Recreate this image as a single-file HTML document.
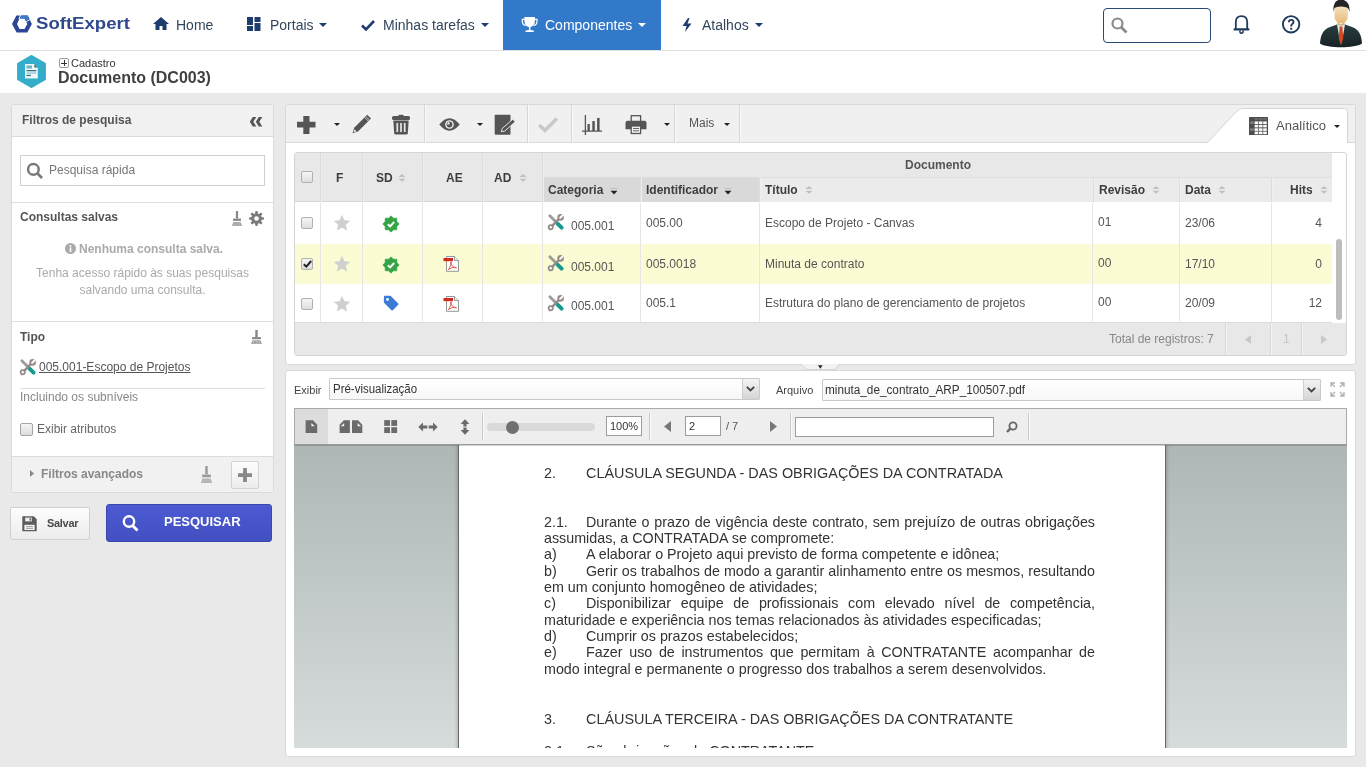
<!DOCTYPE html>
<html><head><meta charset="utf-8">
<style>
*{box-sizing:border-box;margin:0;padding:0}
html,body{width:1366px;height:768px;overflow:hidden}
body{position:relative;will-change:transform;background:#e9e9e9;font-family:"Liberation Sans",sans-serif;color:#333}
.a{position:absolute;white-space:nowrap}
svg{position:absolute;overflow:visible}
/* header */
#hdr{position:absolute;left:0;top:0;width:1366px;height:51px;background:#fff;border-bottom:1px solid #dedede}
.nav{font-size:14px;color:#33465c;top:17px}
#comp{position:absolute;left:503px;top:0;width:158px;height:50px;background:#3279c9}
#ttl{position:absolute;left:0;top:51px;width:1366px;height:42px;background:#fff}
/* left panel */
#lp{position:absolute;left:11px;top:104px;width:263px;height:389px;background:#fff;border:1px solid #d9d9d9;border-radius:2px}
</style></head><body>
<div id="hdr"></div>
<div id="comp"></div>
<!-- logo -->
<svg style="left:8px;top:10px" width="30" height="28" viewBox="0 0 30 28">
<path fill-rule="evenodd" d="M4 14L8.4 5.5H19.7L23.9 14L19.3 22.6H8.6Z M9 14L11.5 8.6H16.5L19.3 14L16.5 19H11.5Z" fill="#2d4797"/>
<path d="M12.7 5L10.9 9M21.9 9.6L18.3 11.6" stroke="#fff" stroke-width="1"/>
<path d="M13.5 5.5H19.7L21.5 9.1L18.1 11L16.5 8.6H11.9Z" fill="#3a78cf"/>
</svg>
<div class="a" id="logo" style="left:36px;top:14px;font-size:16.5px;font-weight:bold;color:#2f4a8c;transform-origin:0 0;transform:scaleX(1.125)">SoftExpert</div>
<!-- Home -->
<svg style="left:153px;top:17px" width="16" height="13" viewBox="0 0 16 13"><path d="M8 0L16 7H13.5V13H9.5V9H6.5V13H2.5V7H0Z" fill="#1e3c6d"/></svg>
<div class="a nav" style="left:176px">Home</div>
<svg style="left:247px;top:17px" width="14" height="14" viewBox="0 0 14 14"><rect x="0" y="0" width="6" height="8" fill="#1e3c6d"/><rect x="0" y="9" width="6" height="5" fill="#1e3c6d"/><rect x="7.5" y="0" width="6" height="5" fill="#1e3c6d"/><rect x="7.5" y="6" width="6" height="8" fill="#1e3c6d"/></svg>
<div class="a nav" style="left:270px">Portais</div>
<svg style="left:319px;top:23px" width="8" height="4" viewBox="0 0 8 4"><path d="M0 0H8L4 4Z" fill="#1e3c6d"/></svg>
<svg style="left:361px;top:20px" width="14" height="11" viewBox="0 0 14 11"><path d="M1 5.5L5 9.5L13 1" stroke="#1e3c6d" stroke-width="2.6" fill="none"/></svg>
<div class="a nav" style="left:383px">Minhas tarefas</div>
<svg style="left:481px;top:23px" width="8" height="4" viewBox="0 0 8 4"><path d="M0 0H8L4 4Z" fill="#1e3c6d"/></svg>
<svg style="left:521px;top:16px" width="17" height="17" viewBox="0 0 17 17"><path d="M3.4 1H13.9V5Q13.9 10.5 8.65 11.3Q3.4 10.5 3.4 5Z" fill="#fff"/><path d="M3.6 3.4H1.3V5.2Q1.3 8.6 4.6 9.6M13.7 3.4H16V5.2Q16 8.6 12.7 9.6" stroke="#fff" stroke-width="1.2" fill="none"/><rect x="7.9" y="10.8" width="1.5" height="3.6" fill="#fff"/><path d="M4.5 16V14.6Q8.65 13.4 12.8 14.6V16Z" fill="#fff"/></svg>
<div class="a nav" style="left:545px;color:#fff">Componentes</div>
<svg style="left:638px;top:23px" width="8" height="4" viewBox="0 0 8 4"><path d="M0 0H8L4 4Z" fill="#fff"/></svg>
<svg style="left:682px;top:18px" width="10" height="14" viewBox="0 0 10 14"><path d="M6 0L0.5 8H4.5L3 14L9.5 5.5H5.5L7.5 0Z" fill="#1e3c6d"/></svg>
<div class="a nav" style="left:702px">Atalhos</div>
<svg style="left:755px;top:23px" width="8" height="4" viewBox="0 0 8 4"><path d="M0 0H8L4 4Z" fill="#1e3c6d"/></svg>
<!-- search -->
<div class="a" style="left:1103px;top:8px;width:108px;height:35px;border:1.5px solid #284a75;border-radius:4px;background:#fff"></div>
<svg style="left:1111px;top:17px" width="18" height="16" viewBox="0 0 18 16"><circle cx="6.5" cy="6.5" r="5" stroke="#8a8a8a" stroke-width="2.2" fill="none"/><path d="M10 10L15.5 15.5" stroke="#8a8a8a" stroke-width="2.8"/></svg>
<!-- bell -->
<svg style="left:1233px;top:15px" width="17" height="19" viewBox="0 0 17 19"><path d="M2.8 14V7.2Q2.8 1.1 8.5 1.1Q14.2 1.1 14.2 7.2V14" stroke="#1e3a5f" stroke-width="1.8" fill="none"/><rect x="0.5" y="13.3" width="16" height="2.2" rx="1" fill="#1e3a5f"/><path d="M6.8 15.5Q6.8 18.3 8.5 18.3Q10.2 18.3 10.2 15.5" stroke="#1e3a5f" stroke-width="1.5" fill="none"/></svg>
<!-- help -->
<svg style="left:1282px;top:15px" width="19" height="19" viewBox="0 0 19 19"><circle cx="9.1" cy="9.3" r="8.2" stroke="#1e3a5f" stroke-width="1.9" fill="none"/><path d="M6.9 7.3Q6.9 4.9 9.2 4.9Q11.5 4.9 11.5 7Q11.5 8.3 10.2 9Q9.2 9.6 9.2 11V11.5" stroke="#1e3a5f" stroke-width="1.9" fill="none"/><rect x="8.2" y="12.8" width="2" height="1.9" fill="#1e3a5f"/></svg>
<!-- avatar -->
<svg style="left:1319px;top:0px" width="44" height="48" viewBox="0 0 44 48">
<defs><linearGradient id="face" x1="0" y1="0" x2="0" y2="1"><stop offset="0" stop-color="#f7e6c6"/><stop offset="1" stop-color="#e8b97a"/></linearGradient>
<linearGradient id="suit" x1="0" y1="0" x2="0" y2="1"><stop offset="0" stop-color="#2a3d40"/><stop offset="1" stop-color="#162326"/></linearGradient></defs>
<path d="M1 43.5C1.5 35 4 29.5 11 27L18 24.5H26L33 27C40 29.5 42.5 35 43 43.5C36 48.5 8 48.5 1 43.5Z" fill="url(#suit)"/>
<path d="M18 24.5H26L24 36L22 44L20 36Z" fill="#e4e6ef"/>
<path d="M20.7 26.5H23.3L24.3 38L22 45.5L19.7 38Z" fill="#d04a1e"/>
<path d="M18.5 20L22 26.5L25.5 20V24L22 27L18.5 24Z" fill="#d9a86a"/>
<path d="M15.5 9.5Q15.5 4 22 4Q28.8 4 28.8 9.5V16Q28.8 23 22 23.5Q15.5 23 15.5 16Z" fill="url(#face)"/>
<path d="M14.3 12Q13.5 0 22 -0.5Q31 0 30.6 12Q29.5 7.5 27 7.2Q22 6 17 7.2Q15 7.5 14.3 12Z" fill="#252525"/>
</svg>
<!-- title -->
<div id="ttl"></div>
<svg style="left:17px;top:55px" width="29" height="33" viewBox="0 0 29 33"><path d="M14.5 0.6L28.3 8.5V24.5L14.5 32.4L0.7 24.5V8.5Z" fill="#33adc9" stroke="#33adc9" stroke-width="1.2" stroke-linejoin="round"/><path d="M8 9H17.3L20.8 12.5V23.6H8Z" fill="#eef8fb"/><path d="M17.3 9V12.5H20.8Z" fill="#3b6e80"/><rect x="9.5" y="10.5" width="5.5" height="3" fill="#6fb3c6"/><rect x="9.5" y="15" width="9.8" height="1.3" fill="#3b6e80"/><rect x="9.5" y="17.3" width="9.8" height="1.5" fill="#9cc9d6"/><rect x="9.5" y="19.8" width="4.2" height="1.3" fill="#3b6e80"/></svg>
<div class="a" style="left:59px;top:58px;width:10px;height:10px;border:1px solid #9a9a9a;border-radius:2px"></div>
<div class="a" style="left:61px;top:62.5px;width:6px;height:1px;background:#333"></div>
<div class="a" style="left:63.5px;top:60px;width:1px;height:6px;background:#333"></div>
<div class="a" style="left:71px;top:57px;font-size:11px;color:#333">Cadastro</div>
<div class="a" style="left:58px;top:69px;font-size:16px;font-weight:bold;color:#404040">Documento (DC003)</div>
<!-- left panel -->
<div class="a" style="left:11px;top:104px;width:263px;height:389px;background:#fff;border:1px solid #dadada;border-radius:3px"></div>
<div class="a" style="left:12px;top:105px;width:261px;height:32px;background:#f1f1f1;border-bottom:1px solid #dcdcdc;border-radius:2px 2px 0 0"></div>
<div class="a" style="left:22px;top:113px;font-size:12px;font-weight:bold;color:#555">Filtros de pesquisa</div>
<svg style="left:249px;top:116px" width="14" height="12" viewBox="0 0 14 12"><path d="M3.8 1H7.3L4.3 5.8L7.3 10.6H3.8L0.8 5.8Z M9.8 1H13.3L10.3 5.8L13.3 10.6H9.8L6.8 5.8Z" fill="#555"/></svg>
<div class="a" style="left:20px;top:155px;width:245px;height:31px;border:1px solid #cfcfcf;background:#fff"></div>
<svg style="left:27px;top:163px" width="17" height="17" viewBox="0 0 17 17"><circle cx="6.4" cy="6.4" r="5.3" stroke="#7a7a7a" stroke-width="2.5" fill="none"/><path d="M10.3 10.3L15 15" stroke="#7a7a7a" stroke-width="2.7"/></svg>
<div class="a" style="left:49px;top:163px;font-size:12px;color:#777">Pesquisa rápida</div>
<div class="a" style="left:12px;top:202px;width:261px;height:1px;background:#dedede"></div>
<div class="a" style="left:20px;top:210px;font-size:12px;font-weight:bold;color:#555">Consultas salvas</div>
<svg style="left:232px;top:211px" width="10" height="15" viewBox="0 0 10 15" preserveAspectRatio="none"><rect x="3.9" y="0" width="2.2" height="7.5" fill="#888"/><rect x="1" y="7.6" width="8" height="2.3" fill="#888"/><path d="M1.3 11H8.7L10 15H0Z" fill="#888" opacity="0.75"/><path d="M2.5 11.5V14.8M5 11.5V14.8M7.5 11.5V14.8" stroke="#fff" stroke-width="0.35" opacity="0.6"/></svg>
<svg style="left:249px;top:211px" width="15" height="15" viewBox="0 0 15 15"><g fill="#7a7a7a"><circle cx="7.5" cy="7.5" r="5.3"/><rect x="6.2" y="0" width="2.6" height="15" rx="1" transform="rotate(0 7.5 7.5)"/><rect x="6.2" y="0" width="2.6" height="15" rx="1" transform="rotate(45 7.5 7.5)"/><rect x="6.2" y="0" width="2.6" height="15" rx="1" transform="rotate(90 7.5 7.5)"/><rect x="6.2" y="0" width="2.6" height="15" rx="1" transform="rotate(135 7.5 7.5)"/></g><circle cx="7.5" cy="7.5" r="2.3" fill="#fff"/></svg>
<svg style="left:65px;top:243px" width="11" height="11" viewBox="0 0 11 11"><circle cx="5.5" cy="5.5" r="5.5" fill="#aaa"/><rect x="4.7" y="4.5" width="1.6" height="4.5" fill="#fff"/><circle cx="5.5" cy="2.9" r="0.95" fill="#fff"/></svg>
<div class="a" style="left:79px;top:242px;font-size:12px;font-weight:bold;color:#aaa">Nenhuma consulta salva.</div>
<div class="a" style="left:12px;top:265px;width:261px;text-align:center;font-size:12px;color:#aaa;line-height:17px;white-space:normal">Tenha acesso rápido às suas pesquisas<br>salvando uma consulta.</div>
<div class="a" style="left:12px;top:321px;width:261px;height:1px;background:#dedede"></div>
<div class="a" style="left:20px;top:330px;font-size:12px;font-weight:bold;color:#555">Tipo</div>
<svg style="left:251px;top:330px" width="11" height="14" viewBox="0 0 10 15" preserveAspectRatio="none"><rect x="3.9" y="0" width="2.2" height="7.5" fill="#888"/><rect x="1" y="7.6" width="8" height="2.3" fill="#888"/><path d="M1.3 11H8.7L10 15H0Z" fill="#888" opacity="0.75"/><path d="M2.5 11.5V14.8M5 11.5V14.8M7.5 11.5V14.8" stroke="#fff" stroke-width="0.35" opacity="0.6"/></svg>
<svg style="left:20px;top:359px" width="16" height="16" viewBox="0 0 16 16"><path d="M1.8 1.8L8.8 8.8" stroke="#9c9c9c" stroke-width="2.8" stroke-linecap="round"/><path d="M9.8 9.8L13.6 13.6" stroke="#179a8c" stroke-width="4" stroke-linecap="round"/><path d="M11.8 4.2L3.2 12.8" stroke="#8f8a88" stroke-width="2.4"/><circle cx="12.6" cy="3.4" r="3.3" fill="#9a8c84"/><path d="M12.2 3.8L14.6 1.4" stroke="#fff" stroke-width="2" stroke-linecap="round"/><circle cx="2.7" cy="13.3" r="2.1" fill="#fff" stroke="#8f8a88" stroke-width="1.7"/></svg>
<div class="a" style="left:39px;top:360px;font-size:12px;color:#555;text-decoration:underline">005.001-Escopo de Projetos</div>
<div class="a" style="left:20px;top:388px;width:245px;height:1px;background:#dedede"></div>
<div class="a" style="left:20px;top:390px;font-size:12px;color:#888">Incluindo os subníveis</div>
<div class="a" style="left:20px;top:423px;width:13px;height:13px;border:1px solid #a5a5a5;background:linear-gradient(#f4f4f4,#dcdcdc);border-radius:2px"></div>
<div class="a" style="left:37px;top:422px;font-size:12px;color:#666">Exibir atributos</div>
<div class="a" style="left:12px;top:456px;width:261px;height:36px;background:#f1f1f1;border-top:1px solid #dcdcdc;border-radius:0 0 2px 2px"></div>
<svg style="left:30px;top:470px" width="4" height="7" viewBox="0 0 4 7"><path d="M0 0L4 3.5L0 7Z" fill="#888"/></svg>
<div class="a" style="left:41px;top:467px;font-size:12px;font-weight:bold;color:#888">Filtros avançados</div>
<svg style="left:201px;top:466px" width="11" height="17" viewBox="0 0 10 15" preserveAspectRatio="none"><rect x="3.9" y="0" width="2.2" height="7.5" fill="#999"/><rect x="1" y="7.6" width="8" height="2.3" fill="#999"/><path d="M1.3 11H8.7L10 15H0Z" fill="#999" opacity="0.75"/><path d="M2.5 11.5V14.8M5 11.5V14.8M7.5 11.5V14.8" stroke="#fff" stroke-width="0.35" opacity="0.6"/></svg>
<div class="a" style="left:231px;top:461px;width:28px;height:28px;border:1px solid #d3d3d3;background:linear-gradient(#fdfdfd,#ececec);border-radius:2px"></div>
<svg style="left:238px;top:468px" width="14" height="14" viewBox="0 0 14 14"><path d="M5.1 0H8.9V5.2H14V8.9H8.9V14H5.1V8.9H0V5.2H5.1Z" fill="#888"/></svg>
<!-- buttons -->
<div class="a" style="left:10px;top:507px;width:80px;height:33px;border:1px solid #cfcfcf;background:linear-gradient(#fdfdfd,#ececec);border-radius:2px"></div>
<svg style="left:22px;top:516px" width="15" height="16" viewBox="0 0 15 16"><path d="M0.3 0.3H11.8L14.7 3.2V15.3H0.3Z" fill="#5c5c5c"/><rect x="3.2" y="1.6" width="6.6" height="3.8" fill="#efefef"/><rect x="7.6" y="2.2" width="1.4" height="2.4" fill="#5c5c5c"/><rect x="2.4" y="8.8" width="10.2" height="5.2" fill="#f4f4f4"/><path d="M4 10.6H11M4 12.4H11" stroke="#8a8a8a" stroke-width="0.8"/></svg>
<div class="a" style="left:47px;top:517px;font-size:11px;font-weight:bold;color:#4a4a4a;letter-spacing:-0.3px">Salvar</div>
<div class="a" style="left:106px;top:504px;width:166px;height:38px;background:linear-gradient(#4c5ad2,#4250c2);border:1px solid #3a47ad;border-radius:3px"></div>
<svg style="left:122px;top:514px" width="17" height="18" viewBox="0 0 17 18"><circle cx="7" cy="7.5" r="5.2" stroke="#fff" stroke-width="2.4" fill="none"/><path d="M10.5 11.5L15.5 16.5" stroke="#fff" stroke-width="2.8"/></svg>
<div class="a" style="left:164px;top:514px;font-size:13px;font-weight:bold;color:#fff">PESQUISAR</div>
<!-- main panel -->
<div class="a" style="left:285px;top:104px;width:1071px;height:261px;background:#fff;border:1px solid #d8d8d8;border-radius:3px"></div>
<div class="a" style="left:286px;top:105px;width:1069px;height:38px;background:#f0f0f0;border-bottom:1px solid #d8d8d8;border-radius:2px 2px 0 0"></div>
<svg style="left:297px;top:116px" width="19" height="18" viewBox="0 0 19 18"><path d="M6.3 0H12.5V5.8H18.5V11.6H12.5V18H6.3V11.6H0V5.8H6.3Z" fill="#555"/></svg>
<svg style="left:334px;top:123px" width="6" height="3" viewBox="0 0 6 3"><path d="M0 0H6L3.0 3Z" fill="#222"/></svg>
<svg style="left:352px;top:114px" width="20" height="20" viewBox="0 0 20 20"><path d="M15.2 0.8L19 4.6L6 17.6L0.5 19.3L2.2 13.8Z" fill="#555"/><path d="M12.6 3.4L16.4 7.2M13.7 2.3L17.5 6.1" stroke="#f0f0f0" stroke-width="0.7"/><path d="M2.4 15.2L4.6 17.4L1.6 18.3Z" fill="#f0f0f0"/></svg>
<svg style="left:391px;top:114px" width="20" height="21" viewBox="0 0 20 21"><path d="M7.5 0.8H12.5V2.3H7.5Z" fill="#555"/><rect x="1" y="2" width="18" height="4" rx="1.5" fill="#555"/><path d="M2.3 6.5H17.7L16.8 19.2Q16.6 20.5 15.3 20.5H4.7Q3.4 20.5 3.2 19.2Z" fill="#555"/><path d="M6.3 9V18M10 9V18M13.7 9V18" stroke="#e8e8e8" stroke-width="1.7"/></svg>
<div class="a" style="left:424px;top:105px;width:1px;height:38px;background:#d6d6d6;box-shadow:1px 0 0 #fafafa"></div>
<svg style="left:439px;top:118px" width="21" height="13" viewBox="0 0 21 13"><path d="M0.3 6.5Q10.5 -6 20.7 6.5Q10.5 19 0.3 6.5Z" fill="#555"/><circle cx="10.5" cy="6.5" r="4.3" fill="#f0f0f0"/><circle cx="10.5" cy="6.5" r="2.9" fill="#555"/><path d="M10.5 6.5H8.1A2.4 2.4 0 0 1 10.5 4.1Z" fill="#f0f0f0"/></svg>
<svg style="left:477px;top:123px" width="6" height="3" viewBox="0 0 6 3"><path d="M0 0H6L3.0 3Z" fill="#222"/></svg>
<svg style="left:494px;top:114px" width="22" height="21" viewBox="0 0 22 21"><rect x="0.7" y="0.8" width="15.8" height="20" rx="0.8" fill="#555"/><path d="M7.3 17.7L8.2 14.5L18.8 5.15L21.2 7.85L10.6 17.2Z" fill="#555" stroke="#f0f0f0" stroke-width="0.9" stroke-linejoin="round"/></svg>
<div class="a" style="left:527px;top:105px;width:1px;height:38px;background:#d6d6d6;box-shadow:1px 0 0 #fafafa"></div>
<svg style="left:538px;top:117px" width="20" height="16" viewBox="0 0 20 16"><path d="M1.2 8L7 13.5L18.8 1.5" stroke="#c8c8c8" stroke-width="3.6" fill="none"/></svg>
<div class="a" style="left:571px;top:105px;width:1px;height:38px;background:#d6d6d6;box-shadow:1px 0 0 #fafafa"></div>
<svg style="left:582px;top:115px" width="21" height="20" viewBox="0 0 21 20"><path d="M3.4 0V20M0 16.1H20" stroke="#555" stroke-width="1.3"/><rect x="5.5" y="9" width="2.3" height="7" fill="#555"/><rect x="10.3" y="6.1" width="2.5" height="9.9" fill="#555"/><rect x="15.1" y="2.9" width="2.5" height="13.1" fill="#555"/></svg>
<svg style="left:625px;top:115px" width="22" height="19" viewBox="0 0 22 19"><rect x="6.2" y="0.7" width="9.4" height="6" fill="none" stroke="#555" stroke-width="1.3"/><path d="M2.5 5.8H19.5Q21.5 5.8 21.5 7.8V14.2H0.5V7.8Q0.5 5.8 2.5 5.8Z" fill="#555"/><rect x="6.2" y="11" width="9.4" height="7.5" fill="#f0f0f0" stroke="#555" stroke-width="1.3"/><path d="M8 13.5H14M8 15.8H14" stroke="#555" stroke-width="0.9"/></svg>
<svg style="left:664px;top:123px" width="6" height="3" viewBox="0 0 6 3"><path d="M0 0H6L3.0 3Z" fill="#222"/></svg>
<div class="a" style="left:674px;top:105px;width:1px;height:38px;background:#d6d6d6;box-shadow:1px 0 0 #fafafa"></div>
<div class="a" style="left:689px;top:116px;font-size:12px;color:#555">Mais</div>
<svg style="left:724px;top:123px" width="6" height="3" viewBox="0 0 6 3"><path d="M0 0H6L3.0 3Z" fill="#222"/></svg>
<div class="a" style="left:739px;top:105px;width:1px;height:38px;background:#d6d6d6;box-shadow:1px 0 0 #fafafa"></div>
<!-- analitico tab -->
<svg style="left:1206px;top:108px" width="143" height="36" viewBox="0 0 143 36"><path d="M0.5 35.5L31 3Q33.5 0.5 37 0.5H138.5Q141.5 0.5 141.5 3.5V35.5" fill="#fff" stroke="#d5d5d5" stroke-width="1"/><rect x="0" y="35" width="142" height="2" fill="#fff"/></svg>
<svg style="left:1249px;top:117px" width="19" height="18" viewBox="0 0 19 18"><rect x="0" y="0" width="19" height="18" rx="0.6" fill="#4d4d4d"/><g fill="#fbfbfb"><rect x="5.6" y="4.4" width="3.6" height="2.6"/><rect x="5.6" y="7.8" width="3.6" height="2.6"/><rect x="5.6" y="11.3" width="3.6" height="2.6"/><rect x="5.6" y="14.6" width="3.6" height="2.6"/><rect x="9.9" y="4.4" width="3.6" height="2.6"/><rect x="9.9" y="7.8" width="3.6" height="2.6"/><rect x="9.9" y="11.3" width="3.6" height="2.6"/><rect x="9.9" y="14.6" width="3.6" height="2.6"/><rect x="14.2" y="4.4" width="3.6" height="2.6"/><rect x="14.2" y="7.8" width="3.6" height="2.6"/><rect x="14.2" y="11.3" width="3.6" height="2.6"/><rect x="14.2" y="14.6" width="3.6" height="2.6"/></g><g fill="#7a7a7a"><rect x="1" y="4.4" width="3.8" height="2.6"/><rect x="1" y="11.3" width="3.8" height="2.6"/></g><g fill="#6a6a6a"><rect x="5.6" y="1" width="3.6" height="2.2"/><rect x="9.9" y="1" width="3.6" height="2.2"/><rect x="14.2" y="1" width="3.6" height="2.2"/></g></svg>
<div class="a" style="left:1276px;top:118px;font-size:13px;color:#555">Analítico</div>
<svg style="left:1334px;top:125px" width="6" height="3" viewBox="0 0 6 3"><path d="M0 0H6L3.0 3Z" fill="#222"/></svg>
<!-- table -->
<div class="a" style="left:294px;top:152px;width:1053px;height:204px;border:1px solid #d5d5d5;border-radius:3px;background:#fff"></div>
<div class="a" style="left:295px;top:153px;width:1037px;height:49px;background:#e8e8e8;border-bottom:1px solid #d6d6d6"></div>
<div class="a" style="left:542px;top:177px;width:790px;height:25px;background:#ebebeb;border-top:1px solid #dedede"></div>
<div class="a" style="left:542px;top:178px;width:217px;height:24px;background:#d9d9d9"></div>
<div class="a" style="left:320px;top:153px;width:1px;height:49px;background:#dcdcdc;box-shadow:1px 0 0 #ececec"></div>
<div class="a" style="left:362px;top:153px;width:1px;height:49px;background:#dcdcdc;box-shadow:1px 0 0 #ececec"></div>
<div class="a" style="left:422px;top:153px;width:1px;height:49px;background:#dcdcdc;box-shadow:1px 0 0 #ececec"></div>
<div class="a" style="left:482px;top:153px;width:1px;height:49px;background:#dcdcdc;box-shadow:1px 0 0 #ececec"></div>
<div class="a" style="left:542px;top:153px;width:1px;height:49px;background:#dcdcdc;box-shadow:1px 0 0 #ececec"></div>
<div class="a" style="left:640px;top:178px;width:1px;height:24px;background:#dddddd;box-shadow:1px 0 0 #efefef"></div>
<div class="a" style="left:759px;top:178px;width:1px;height:24px;background:#dddddd;box-shadow:1px 0 0 #efefef"></div>
<div class="a" style="left:1093px;top:178px;width:1px;height:24px;background:#dddddd;box-shadow:1px 0 0 #efefef"></div>
<div class="a" style="left:1179px;top:178px;width:1px;height:24px;background:#dddddd;box-shadow:1px 0 0 #efefef"></div>
<div class="a" style="left:1271px;top:178px;width:1px;height:24px;background:#dddddd;box-shadow:1px 0 0 #efefef"></div>
<div class="a" style="left:301px;top:171px;width:12px;height:12px;border:1px solid #b0b0b0;border-radius:2px;background:linear-gradient(#f6f6f6,#dedede)"></div>
<div class="a" style="left:336px;top:171px;font-size:12px;font-weight:bold;color:#3d3d3d">F</div>
<div class="a" style="left:376px;top:171px;font-size:12px;font-weight:bold;color:#3d3d3d">SD</div>
<svg style="left:398px;top:174px" width="8" height="8" viewBox="0 0 8 8"><path d="M0.5 3L4 0L7.5 3Z M0.5 4.8L4 7.8L7.5 4.8Z" fill="#c0c0c0"/></svg>
<div class="a" style="left:446px;top:171px;font-size:12px;font-weight:bold;color:#3d3d3d">AE</div>
<div class="a" style="left:494px;top:171px;font-size:12px;font-weight:bold;color:#3d3d3d">AD</div>
<svg style="left:519px;top:174px" width="8" height="8" viewBox="0 0 8 8"><path d="M0.5 3L4 0L7.5 3Z M0.5 4.8L4 7.8L7.5 4.8Z" fill="#c0c0c0"/></svg>
<div class="a" style="left:905px;top:158px;font-size:12px;font-weight:bold;color:#555">Documento</div>
<div class="a" style="left:548px;top:183px;font-size:12px;font-weight:bold;color:#3d3d3d">Categoria</div>
<svg style="left:610px;top:187px" width="8" height="8" viewBox="0 0 8 8"><path d="M0.5 1.5H7.5" stroke="#bbb" stroke-width="1"/><path d="M0.5 3.8L4 7.5L7.5 3.8Z" fill="#222"/></svg>
<div class="a" style="left:646px;top:183px;font-size:12px;font-weight:bold;color:#3d3d3d">Identificador</div>
<svg style="left:724px;top:187px" width="8" height="8" viewBox="0 0 8 8"><path d="M0.5 1.5H7.5" stroke="#bbb" stroke-width="1"/><path d="M0.5 3.8L4 7.5L7.5 3.8Z" fill="#222"/></svg>
<div class="a" style="left:765px;top:183px;font-size:12px;font-weight:bold;color:#3d3d3d">Título</div>
<svg style="left:805px;top:186px" width="8" height="8" viewBox="0 0 8 8"><path d="M0.5 3L4 0L7.5 3Z M0.5 4.8L4 7.8L7.5 4.8Z" fill="#c0c0c0"/></svg>
<div class="a" style="left:1099px;top:183px;font-size:12px;font-weight:bold;color:#3d3d3d">Revisão</div>
<svg style="left:1152px;top:186px" width="8" height="8" viewBox="0 0 8 8"><path d="M0.5 3L4 0L7.5 3Z M0.5 4.8L4 7.8L7.5 4.8Z" fill="#c0c0c0"/></svg>
<div class="a" style="left:1185px;top:183px;font-size:12px;font-weight:bold;color:#3d3d3d">Data</div>
<svg style="left:1218px;top:186px" width="8" height="8" viewBox="0 0 8 8"><path d="M0.5 3L4 0L7.5 3Z M0.5 4.8L4 7.8L7.5 4.8Z" fill="#c0c0c0"/></svg>
<div class="a" style="left:1290px;top:183px;font-size:12px;font-weight:bold;color:#3d3d3d">Hits</div>
<svg style="left:1320px;top:186px" width="8" height="8" viewBox="0 0 8 8"><path d="M0.5 3L4 0L7.5 3Z M0.5 4.8L4 7.8L7.5 4.8Z" fill="#c0c0c0"/></svg>
<div class="a" style="left:295px;top:244px;width:1037px;height:40px;background:#fcfcd4"></div>
<div class="a" style="left:320px;top:203px;width:1px;height:120px;background:#e6e6e6"></div>
<div class="a" style="left:362px;top:203px;width:1px;height:120px;background:#e6e6e6"></div>
<div class="a" style="left:422px;top:203px;width:1px;height:120px;background:#e6e6e6"></div>
<div class="a" style="left:482px;top:203px;width:1px;height:120px;background:#e6e6e6"></div>
<div class="a" style="left:542px;top:203px;width:1px;height:120px;background:#e6e6e6"></div>
<div class="a" style="left:640px;top:203px;width:1px;height:120px;background:#e6e6e6"></div>
<div class="a" style="left:759px;top:203px;width:1px;height:120px;background:#e6e6e6"></div>
<div class="a" style="left:1092px;top:203px;width:1px;height:120px;background:#e6e6e6"></div>
<div class="a" style="left:1179px;top:203px;width:1px;height:120px;background:#e6e6e6"></div>
<div class="a" style="left:1271px;top:203px;width:1px;height:120px;background:#e6e6e6"></div>
<div class="a" style="left:295px;top:322px;width:1037px;height:1px;background:#dcdcdc"></div>
<div class="a" style="left:301px;top:217px;width:12px;height:12px;border:1px solid #b0b0b0;border-radius:2px;background:linear-gradient(#f6f6f6,#dedede)"></div>
<svg style="left:334px;top:215px" width="16" height="16" viewBox="0 0 16 16"><path d="M8 0.5L10.2 5.6L15.6 6.1L11.5 9.7L12.7 15.1L8 12.3L3.3 15.1L4.5 9.7L0.4 6.1L5.8 5.6Z" fill="#cfcfcf" stroke="#cfcfcf" stroke-width="0.6" stroke-linejoin="round"/></svg>
<svg style="left:383px;top:216px" width="16" height="16" viewBox="0 0 16 16"><path d="M8.00 -0.10 L10.41 2.18 L13.73 2.27 L13.82 5.59 L16.10 8.00 L13.82 10.41 L13.73 13.73 L10.41 13.82 L8.00 16.10 L5.59 13.82 L2.27 13.73 L2.18 10.41 L-0.10 8.00 L2.18 5.59 L2.27 2.27 L5.59 2.18Z" fill="#34a447" stroke="#34a447" stroke-width="0.8" stroke-linejoin="round"/><path d="M4.8 8.3L7.1 10.4L11.2 6" stroke="#fff" stroke-width="1.9" fill="none"/></svg>
<svg style="left:548px;top:214px" width="16" height="16" viewBox="0 0 16 16"><path d="M1.8 1.8L8.8 8.8" stroke="#9c9c9c" stroke-width="2.8" stroke-linecap="round"/><path d="M9.8 9.8L13.6 13.6" stroke="#179a8c" stroke-width="4" stroke-linecap="round"/><path d="M11.8 4.2L3.2 12.8" stroke="#8f8a88" stroke-width="2.4"/><circle cx="12.6" cy="3.4" r="3.3" fill="#9a8c84"/><path d="M12.2 3.8L14.6 1.4" stroke="#fff" stroke-width="2" stroke-linecap="round"/><circle cx="2.7" cy="13.3" r="2.1" fill="#fff" stroke="#8f8a88" stroke-width="1.7"/></svg>
<div class="a" style="left:571px;top:219px;font-size:12px;color:#555">005.001</div>
<div class="a" style="left:646px;top:216px;font-size:12px;color:#555">005.00</div>
<div class="a" style="left:765px;top:216px;font-size:12px;color:#555">Escopo de Projeto - Canvas</div>
<div class="a" style="left:1098px;top:215px;font-size:12px;color:#555">01</div>
<div class="a" style="left:1185px;top:216px;font-size:12px;color:#555">23/06</div>
<div class="a" style="left:1230px;top:216px;width:92px;text-align:right;font-size:12px;color:#555">4</div>
<div class="a" style="left:301px;top:258px;width:12px;height:12px;border:1px solid #b0b0b0;border-radius:2px;background:linear-gradient(#f6f6f6,#dedede)"></div><svg style="left:303px;top:260px" width="9" height="8" viewBox="0 0 9 8"><path d="M0.8 4.2L3.3 6.6L8.2 1" stroke="#222" stroke-width="2" fill="none"/></svg>
<svg style="left:334px;top:256px" width="16" height="16" viewBox="0 0 16 16"><path d="M8 0.5L10.2 5.6L15.6 6.1L11.5 9.7L12.7 15.1L8 12.3L3.3 15.1L4.5 9.7L0.4 6.1L5.8 5.6Z" fill="#cfcfcf" stroke="#cfcfcf" stroke-width="0.6" stroke-linejoin="round"/></svg>
<svg style="left:383px;top:257px" width="16" height="16" viewBox="0 0 16 16"><path d="M8.00 -0.10 L10.41 2.18 L13.73 2.27 L13.82 5.59 L16.10 8.00 L13.82 10.41 L13.73 13.73 L10.41 13.82 L8.00 16.10 L5.59 13.82 L2.27 13.73 L2.18 10.41 L-0.10 8.00 L2.18 5.59 L2.27 2.27 L5.59 2.18Z" fill="#34a447" stroke="#34a447" stroke-width="0.8" stroke-linejoin="round"/><path d="M4.8 8.3L7.1 10.4L11.2 6" stroke="#fff" stroke-width="1.9" fill="none"/></svg>
<svg style="left:443px;top:254.5px" width="17" height="17" viewBox="0 0 17 17"><path d="M3.5 1.5H11.5L15.5 5.5V16.3H3.5Z" fill="#fff" stroke="#8a8a8a" stroke-width="0.9"/><path d="M11.5 1.5V5.5H15.5" fill="#eee" stroke="#8a8a8a" stroke-width="0.8"/><rect x="0.5" y="3" width="9.5" height="3.2" fill="#d32a1e"/><path d="M5.5 14.5C7 12 8.5 9 8.5 7.5C8.5 6.5 7.5 6.5 7.5 7.5C7.5 9.5 10 12.5 13.5 13C12.5 12 9 12 5.5 14.5Z" fill="none" stroke="#d9443a" stroke-width="0.9"/></svg>
<svg style="left:548px;top:255px" width="16" height="16" viewBox="0 0 16 16"><path d="M1.8 1.8L8.8 8.8" stroke="#9c9c9c" stroke-width="2.8" stroke-linecap="round"/><path d="M9.8 9.8L13.6 13.6" stroke="#179a8c" stroke-width="4" stroke-linecap="round"/><path d="M11.8 4.2L3.2 12.8" stroke="#8f8a88" stroke-width="2.4"/><circle cx="12.6" cy="3.4" r="3.3" fill="#9a8c84"/><path d="M12.2 3.8L14.6 1.4" stroke="#fff" stroke-width="2" stroke-linecap="round"/><circle cx="2.7" cy="13.3" r="2.1" fill="#fff" stroke="#8f8a88" stroke-width="1.7"/></svg>
<div class="a" style="left:571px;top:260px;font-size:12px;color:#555">005.001</div>
<div class="a" style="left:646px;top:257px;font-size:12px;color:#555">005.0018</div>
<div class="a" style="left:765px;top:257px;font-size:12px;color:#555">Minuta de contrato</div>
<div class="a" style="left:1098px;top:256px;font-size:12px;color:#555">00</div>
<div class="a" style="left:1185px;top:257px;font-size:12px;color:#555">17/10</div>
<div class="a" style="left:1230px;top:257px;width:92px;text-align:right;font-size:12px;color:#555">0</div>
<div class="a" style="left:301px;top:298px;width:12px;height:12px;border:1px solid #b0b0b0;border-radius:2px;background:linear-gradient(#f6f6f6,#dedede)"></div>
<svg style="left:334px;top:296px" width="16" height="16" viewBox="0 0 16 16"><path d="M8 0.5L10.2 5.6L15.6 6.1L11.5 9.7L12.7 15.1L8 12.3L3.3 15.1L4.5 9.7L0.4 6.1L5.8 5.6Z" fill="#cfcfcf" stroke="#cfcfcf" stroke-width="0.6" stroke-linejoin="round"/></svg>
<svg style="left:383px;top:295px" width="16" height="16" viewBox="0 0 16 16"><path d="M1 1.5Q1 0.8 1.8 0.8H7.5L15.2 8.5Q15.8 9.2 15.2 9.8L9.8 15.2Q9.2 15.8 8.5 15.2L0.8 7.5Z" fill="#3a7bd5"/><circle cx="4.5" cy="4.5" r="1.4" fill="#fff"/></svg>
<svg style="left:443px;top:294.5px" width="17" height="17" viewBox="0 0 17 17"><path d="M3.5 1.5H11.5L15.5 5.5V16.3H3.5Z" fill="#fff" stroke="#8a8a8a" stroke-width="0.9"/><path d="M11.5 1.5V5.5H15.5" fill="#eee" stroke="#8a8a8a" stroke-width="0.8"/><rect x="0.5" y="3" width="9.5" height="3.2" fill="#d32a1e"/><path d="M5.5 14.5C7 12 8.5 9 8.5 7.5C8.5 6.5 7.5 6.5 7.5 7.5C7.5 9.5 10 12.5 13.5 13C12.5 12 9 12 5.5 14.5Z" fill="none" stroke="#d9443a" stroke-width="0.9"/></svg>
<svg style="left:548px;top:295px" width="16" height="16" viewBox="0 0 16 16"><path d="M1.8 1.8L8.8 8.8" stroke="#9c9c9c" stroke-width="2.8" stroke-linecap="round"/><path d="M9.8 9.8L13.6 13.6" stroke="#179a8c" stroke-width="4" stroke-linecap="round"/><path d="M11.8 4.2L3.2 12.8" stroke="#8f8a88" stroke-width="2.4"/><circle cx="12.6" cy="3.4" r="3.3" fill="#9a8c84"/><path d="M12.2 3.8L14.6 1.4" stroke="#fff" stroke-width="2" stroke-linecap="round"/><circle cx="2.7" cy="13.3" r="2.1" fill="#fff" stroke="#8f8a88" stroke-width="1.7"/></svg>
<div class="a" style="left:571px;top:299px;font-size:12px;color:#555">005.001</div>
<div class="a" style="left:646px;top:296px;font-size:12px;color:#555">005.1</div>
<div class="a" style="left:765px;top:296px;font-size:12px;color:#555">Estrutura do plano de gerenciamento de projetos</div>
<div class="a" style="left:1098px;top:295px;font-size:12px;color:#555">00</div>
<div class="a" style="left:1185px;top:296px;font-size:12px;color:#555">20/09</div>
<div class="a" style="left:1230px;top:296px;width:92px;text-align:right;font-size:12px;color:#555">12</div>
<div class="a" style="left:1336px;top:239px;width:6px;height:81px;background:#bdbdbd;border-radius:3px"></div>
<div class="a" style="left:295px;top:323px;width:1051px;height:32px;background:#e8e8e8;border-radius:0 0 2px 2px"></div>
<div class="a" style="left:1109px;top:332px;font-size:12px;color:#888">Total de registros: 7</div>
<div class="a" style="left:1225px;top:323px;width:1px;height:32px;background:#d8d8d8;box-shadow:1px 0 0 #f4f4f4"></div>
<div class="a" style="left:1270px;top:323px;width:1px;height:32px;background:#d8d8d8;box-shadow:1px 0 0 #f4f4f4"></div>
<div class="a" style="left:1301px;top:323px;width:1px;height:32px;background:#d8d8d8;box-shadow:1px 0 0 #f4f4f4"></div>
<svg style="left:1245px;top:335px" width="6" height="9" viewBox="0 0 6 9"><path d="M6 0V9L0 4.5Z" fill="#c8c8c8"/></svg>
<div class="a" style="left:1283px;top:332px;font-size:12px;color:#c4c4c4">1</div>
<svg style="left:1321px;top:335px" width="6" height="9" viewBox="0 0 6 9"><path d="M0 0V9L6 4.5Z" fill="#c8c8c8"/></svg>
<svg style="left:800px;top:364px" width="40" height="7" viewBox="0 0 40 7"><path d="M1 0L6.5 5.6H35.5L39.5 0" fill="#f2f2f2" stroke="#d2d2d2" stroke-width="1"/><path d="M18 1.3L20.3 4.8L22.6 1.3Z" fill="#222"/></svg>
<!-- preview -->
<div class="a" style="left:285px;top:370px;width:1071px;height:387px;background:#fff;border:1px solid #d8d8d8;border-radius:3px"></div>
<div class="a" style="left:294px;top:384px;font-size:11px;color:#444">Exibir</div>
<div class="a" style="left:329px;top:378px;width:431px;height:22px;border:1px solid #c9c9c9;background:linear-gradient(#fff,#f7f7f7);border-radius:1px"></div><div class="a" style="left:742px;top:379px;width:17px;height:20px;background:linear-gradient(#f4f4f4,#d4d4d4);border-left:1px solid #cfcfcf"></div><svg style="left:746px;top:386px" width="9" height="6" viewBox="0 0 9 6"><path d="M0.8 0.8L4.5 4.5L8.2 0.8" stroke="#444" stroke-width="1.8" fill="none"/></svg><div class="a" style="left:333px;top:382px;font-size:12px;color:#333;transform-origin:0 0;transform:scaleX(0.955)">Pré-visualização</div>
<div class="a" style="left:776px;top:384px;font-size:11px;color:#444">Arquivo</div>
<div class="a" style="left:822px;top:379px;width:499px;height:22px;border:1px solid #c9c9c9;background:linear-gradient(#fff,#f7f7f7);border-radius:1px"></div><div class="a" style="left:1303px;top:380px;width:17px;height:20px;background:linear-gradient(#f4f4f4,#d4d4d4);border-left:1px solid #cfcfcf"></div><svg style="left:1307px;top:387px" width="9" height="6" viewBox="0 0 9 6"><path d="M0.8 0.8L4.5 4.5L8.2 0.8" stroke="#444" stroke-width="1.8" fill="none"/></svg><div class="a" style="left:825px;top:383px;font-size:12px;color:#333;transform-origin:0 0;transform:scaleX(0.98)">minuta_de_contrato_ARP_100507.pdf</div>
<svg style="left:1330px;top:382px" width="15" height="15" viewBox="0 0 15 15"><g stroke="#b0b0b0" stroke-width="1.3" fill="none"><path d="M1 5V1H5M1 1L5 5"/><path d="M14 5V1H10M14 1L10 5"/><path d="M1 10V14H5M1 14L5 10"/><path d="M14 10V14H10M14 14L10 10"/></g></svg>
<div class="a" style="left:294px;top:408px;width:1053px;height:37px;background:#eeeeee;border:1px solid #a9a9a9;border-bottom-color:#9a9a9a"></div>
<div class="a" style="left:295px;top:409px;width:33px;height:35px;background:#dcdcdc"></div>
<svg style="left:305px;top:420px" width="13" height="14" viewBox="0 0 13 14"><path d="M0.6 0.2H8L12.2 4.7V13.1H0.6Z" fill="#6a6a6a"/><path d="M6.4 3.1V6.2H9.9Z" fill="#f0f0f0"/></svg>
<svg style="left:339px;top:420px" width="24" height="14" viewBox="0 0 24 14"><path d="M10.9 0.2H4.8L0.6 4.7V13.1H10.9Z" fill="#6a6a6a"/><path d="M5.2 3.1V6.2H1.7Z" fill="#f0f0f0"/><path d="M13 0.2H19.1L23.3 4.7V13.1H13Z" fill="#6a6a6a"/><path d="M18.6 3.1V6.2H22.1Z" fill="#f0f0f0"/></svg>
<svg style="left:384px;top:420px" width="14" height="14" viewBox="0 0 14 14"><g fill="#6a6a6a"><rect x="0.2" y="0.1" width="5.8" height="5.8"/><rect x="7.3" y="0.1" width="5.8" height="5.8"/><rect x="0.2" y="7.2" width="5.8" height="5.8"/><rect x="7.3" y="7.2" width="5.8" height="5.8"/></g></svg>
<svg style="left:418px;top:422px" width="20" height="10" viewBox="0 0 20 10"><path d="M0.3 5L5 0.6V3.4H9.3V6.6H5V9.4Z M19.7 5L15 0.6V3.4H10.7V6.6H15V9.4Z" fill="#6a6a6a"/></svg>
<svg style="left:460px;top:419px" width="10" height="16" viewBox="0 0 10 16"><path d="M5 0.3L9.4 5H6.6V7.4H3.4V5H0.6Z M5 15.7L9.4 11H6.6V8.6H3.4V11H0.6Z" fill="#6a6a6a"/></svg>
<div class="a" style="left:482px;top:413px;width:1px;height:27px;background:#c8c8c8;box-shadow:1px 0 0 #fafafa"></div>
<div class="a" style="left:487px;top:423px;width:108px;height:8px;background:#dadada;border-radius:4px"></div>
<div class="a" style="left:506px;top:421px;width:13px;height:13px;background:#707070;border-radius:50%"></div>
<div class="a" style="left:606px;top:416px;width:36px;height:20px;border:1px solid #9c9c9c;background:#fff"></div>
<div class="a" style="left:610px;top:420px;font-size:11px;color:#333">100%</div>
<div class="a" style="left:649px;top:413px;width:1px;height:27px;background:#c8c8c8;box-shadow:1px 0 0 #fafafa"></div>
<svg style="left:664px;top:421px" width="7" height="11" viewBox="0 0 7 11"><path d="M7 0V11L0 5.5Z" fill="#777"/></svg>
<div class="a" style="left:685px;top:416px;width:36px;height:20px;border:1px solid #9c9c9c;background:#fff"></div>
<div class="a" style="left:689px;top:420px;font-size:11px;color:#333">2</div>
<div class="a" style="left:726px;top:420px;font-size:11px;color:#555">/ 7</div>
<svg style="left:770px;top:421px" width="7" height="11" viewBox="0 0 7 11"><path d="M0 0V11L7 5.5Z" fill="#777"/></svg>
<div class="a" style="left:790px;top:413px;width:1px;height:27px;background:#c8c8c8;box-shadow:1px 0 0 #fafafa"></div>
<div class="a" style="left:795px;top:417px;width:199px;height:20px;border:1px solid #9c9c9c;background:#fff"></div>
<svg style="left:1006px;top:421px" width="12" height="12" viewBox="0 0 12 12"><circle cx="7" cy="5" r="3.6" stroke="#666" stroke-width="1.8" fill="none"/><path d="M4.3 7.7L1 11" stroke="#666" stroke-width="2.4"/></svg>
<div class="a" style="left:1028px;top:413px;width:1px;height:27px;background:#c8c8c8;box-shadow:1px 0 0 #fafafa"></div>
<div class="a" style="left:294px;top:445px;width:1053px;height:303px;background:linear-gradient(#afb7b6,#d5dcdb);overflow:hidden"><div style="position:absolute;left:164px;top:0;width:708px;height:320px;background:#fff;border-left:1.5px solid #666;border-right:1.5px solid #666;box-shadow:-2px 0 2px rgba(0,0,0,0.12),2px 0 2px rgba(0,0,0,0.12)"></div><div style="position:absolute;left:0;top:0;width:1053px;height:1px;background:rgba(0,0,0,0.18)"></div></div>
<div class="a" id="doc" style="left:544px;top:445px;width:551px;height:303px;overflow:hidden;white-space:normal;font-size:14.3px;color:#333;line-height:16.4px">
<div style="position:absolute;top:20px;left:0;white-space:nowrap">2.</div><div style="position:absolute;top:20px;left:42px;white-space:nowrap;font-size:14.4px">CLÁUSULA SEGUNDA - DAS OBRIGAÇÕES DA CONTRATADA</div>
<div style="position:absolute;top:68.5px;left:0;width:551px;text-align:justify;text-align-last:left;line-height:16.35px">
<span style="display:inline-block;width:42px">2.1.</span>Durante o prazo de vigência deste contrato, sem prejuízo de outras obrigações assumidas, a CONTRATADA se compromete:<br>
<span style="display:inline-block;width:42px">a)</span>A elaborar o Projeto aqui previsto de forma competente e idônea;<br>
<span style="display:inline-block;width:42px">b)</span>Gerir os trabalhos de modo a garantir alinhamento entre os mesmos, resultando em um conjunto homogêneo de atividades;<br>
<span style="display:inline-block;width:42px">c)</span>Disponibilizar equipe de profissionais com elevado nível de competência, maturidade e experiência nos temas relacionados às atividades especificadas;<br>
<span style="display:inline-block;width:42px">d)</span>Cumprir os prazos estabelecidos;<br>
<span style="display:inline-block;width:42px">e)</span>Fazer uso de instrumentos que permitam à CONTRATANTE acompanhar de modo integral e permanente o progresso dos trabalhos a serem desenvolvidos.
</div>
<div style="position:absolute;top:266px;left:0;white-space:nowrap">3.</div><div style="position:absolute;top:266px;left:42px;white-space:nowrap;font-size:14.4px">CLÁUSULA TERCEIRA - DAS OBRIGAÇÕES DA CONTRATANTE</div>
<div style="position:absolute;top:298px;left:0;white-space:nowrap">3.1.</div><div style="position:absolute;top:298px;left:42px;white-space:nowrap">São obrigações da CONTRATANTE</div>
</div>
<div class="a" style="left:0;top:767px;width:1366px;height:1px;background:#fff"></div>
</body></html>
